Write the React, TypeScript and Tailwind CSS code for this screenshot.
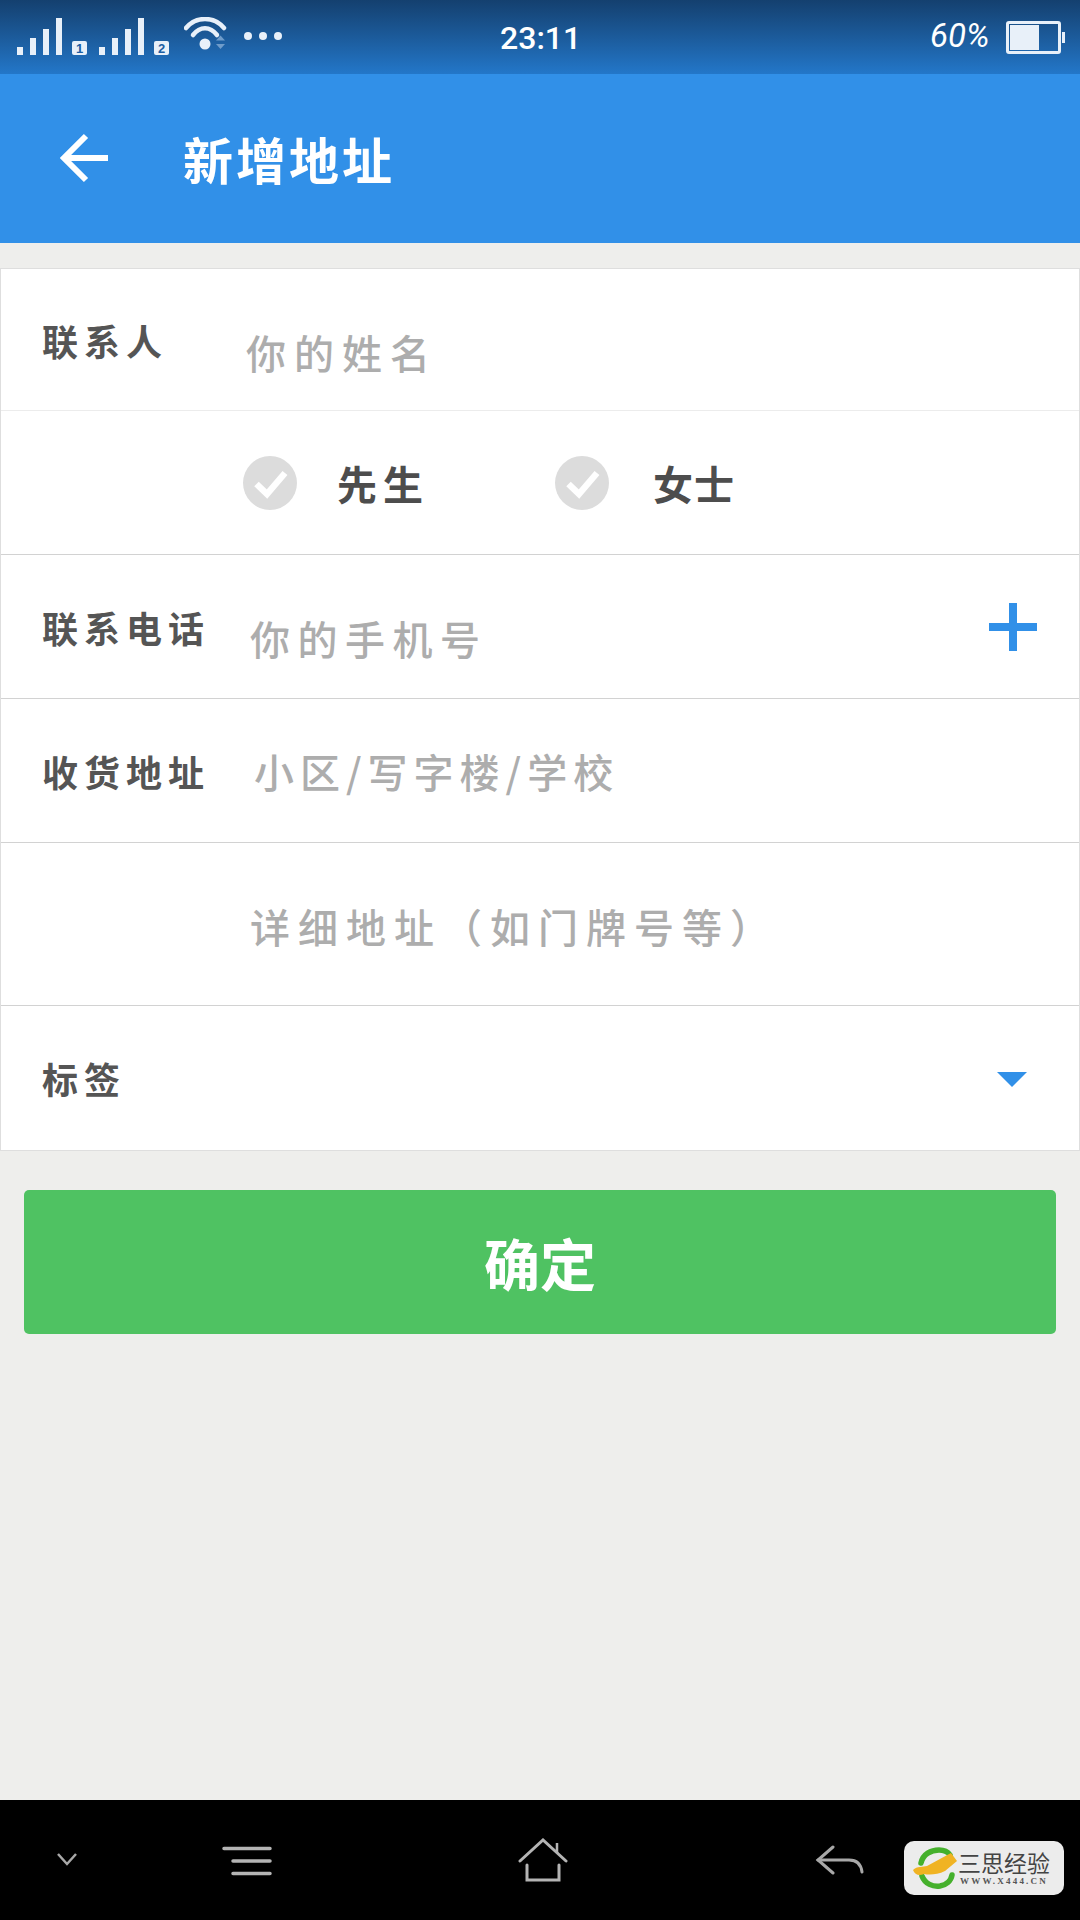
const cjk = "font-['Noto_Sans_CJK_SC','Noto_Sans',sans-serif]";

function SignalBars({ slot }: { slot: string }) {
  return (
    <div className="flex items-end">
      <div className="flex h-[37px] items-end gap-[7px]">
        <span className="h-[8px] w-[6px] bg-[#e8f0f9]" />
        <span className="h-[17px] w-[6px] bg-[#e8f0f9]" />
        <span className="h-[26px] w-[6px] bg-[#e8f0f9]" />
        <span className="h-[37px] w-[6px] bg-[#e8f0f9]" />
      </div>
      <span className="ml-[10px] flex h-[14px] w-[15px] items-center justify-center rounded-[2px] bg-[#e8f0f9] font-['Liberation_Sans',sans-serif] text-[13px] leading-none font-bold text-[#1c5ea3]">
        {slot}
      </span>
    </div>
  );
}

function WifiIcon() {
  return (
    <svg width="44" height="36" viewBox="0 0 44 36" fill="none">
      <path d="M2 11C12 -1 30 -1 40 11" stroke="#e8f0f9" strokeWidth="4.5" strokeLinecap="round" />
      <path d="M9 18C16 9 26 9 33 18" stroke="#e8f0f9" strokeWidth="4.5" strokeLinecap="round" />
      <circle cx="21" cy="27" r="5.5" fill="#e8f0f9" />
      <path d="M32 23.5L36.5 18.5L41 23.5Z" fill="#6f9cca" />
      <path d="M32 27L41 27L36.5 32Z" fill="#6f9cca" />
    </svg>
  );
}

function StatusBar() {
  return (
    <div className="relative flex h-[74px] shrink-0 items-start bg-gradient-to-b from-[#14406f] to-[#2377c9] pl-[17px] text-white">
      <div className="flex pt-[18px]">
        <SignalBars slot="1" />
        <div className="ml-[12px]">
          <SignalBars slot="2" />
        </div>
        <div className="ml-[15px] -mt-[1px]">
          <WifiIcon />
        </div>
        <div className="ml-[16px] flex h-[37px] items-center gap-[7px] pb-[1px]">
          <span className="size-[8px] rounded-full bg-[#e8f0f9]" />
          <span className="size-[8px] rounded-full bg-[#e8f0f9]" />
          <span className="size-[8px] rounded-full bg-[#e8f0f9]" />
        </div>
      </div>
      <span className="absolute left-[500px] top-[18px] font-['Roboto',sans-serif] text-[32px] leading-[40px] font-medium">
        23:11
      </span>
      <span className="absolute left-[930px] top-[16px] font-['Roboto',sans-serif] text-[33px] leading-[40px] font-normal italic">
        60%
      </span>
      <div className="absolute left-[1006px] top-[21px] flex items-center">
        <div className="h-[33px] w-[55px] rounded-[3px] border-[3px] border-[#e8f0f9] p-[1px]">
          <div className="h-full w-[29px] bg-[#e8f0f9]" />
        </div>
        <span className="ml-[1px] h-[11px] w-[3px] bg-[#e8f0f9]" />
      </div>
    </div>
  );
}

function Header() {
  return (
    <header className="flex h-[169px] shrink-0 items-center bg-[#3190e8] pl-[60px] pb-[2px] text-white">
      <svg width="50" height="50" viewBox="0 0 50 50" fill="none">
        <path d="M48 25H5M26 3L4 25L26 47" stroke="#fff" strokeWidth="6" />
      </svg>
      <h1 className={`${cjk} ml-[73px] text-[50px] leading-none font-bold tracking-[3px]`}>新增地址</h1>
    </header>
  );
}

function Label({ children }: { children: string }) {
  return (
    <span className={`${cjk} w-[204px] shrink-0 text-[36px] leading-none font-bold tracking-[6px] text-[#555]`}>
      {children}
    </span>
  );
}

function Hint({ children, className }: { children: string; className: string }) {
  return <span className={`${cjk} text-[40px] leading-none font-medium text-[#adadad] ${className}`}>{children}</span>;
}

function GenderOption({ text, className }: { text: string; className: string }) {
  return (
    <div className={`flex items-center ${className}`}>
      <svg width="54" height="54" viewBox="0 0 54 54" className="shrink-0">
        <circle cx="27" cy="27" r="27" fill="#dcdcdc" />
        <path d="M13.5 28L24 38L42 17" fill="none" stroke="#fff" strokeWidth="6.5" />
      </svg>
      <span className={`${cjk} text-[40px] leading-none font-bold text-[#4d4d4d]`}>{text}</span>
    </div>
  );
}

function Form() {
  return (
    <section className="mt-[25px] border border-[#dedede] bg-white">
      <div className="flex h-[142px] items-center border-b border-[#ececec] pl-[41px]">
        <Label>联系人</Label>
        <Hint className="pt-[25px] tracking-[8px]">你的姓名</Hint>
      </div>
      <div className="flex h-[144px] items-center border-b border-[#d2d2d2] pl-[242px]">
        <GenderOption text="先生" className="w-[312px] gap-[40px] [&>span]:tracking-[6px]" />
        <GenderOption text="女士" className="gap-[44px] [&>span]:tracking-[1px]" />
      </div>
      <div className="flex h-[144px] items-center border-b border-[#d2d2d2] pl-[41px]">
        <Label>联系电话</Label>
        <Hint className="ml-[4px] pt-[22px] tracking-[7.5px]">你的手机号</Hint>
        <svg width="48" height="48" viewBox="0 0 48 48" className="ml-auto mr-[42px]">
          <path d="M20 0H28V20H48V28H28V48H20V28H0V20H20Z" fill="#3190e8" />
        </svg>
      </div>
      <div className="flex h-[144px] items-center border-b border-[#d2d2d2] pl-[41px]">
        <Label>收货地址</Label>
        <Hint className="ml-[8px] tracking-[6px]">小区/写字楼/学校</Hint>
      </div>
      <div className="flex h-[163px] items-center border-b border-[#d2d2d2] pl-[249px]">
        <Hint className="pt-[4px] tracking-[8px]">详细地址（如门牌号等）</Hint>
      </div>
      <div className="flex h-[144px] items-center pl-[41px]">
        <Label>标签</Label>
        <svg width="30" height="15" viewBox="0 0 30 15" className="ml-auto mr-[52px] mt-[2px]">
          <path d="M0 0H30L15 15Z" fill="#3190e8" />
        </svg>
      </div>
    </section>
  );
}

function NavBar() {
  return (
    <nav className="relative flex h-[120px] shrink-0 items-start bg-black">
      <svg width="22" height="14" viewBox="0 0 22 14" fill="none" className="ml-[56px] mt-[52px]">
        <path d="M2 2L11 12L20 2" stroke="#a8a8a8" strokeWidth="2.5" />
      </svg>
      <svg width="50" height="30" viewBox="0 0 50 30" className="ml-[144px] mt-[46px]">
        <path d="M2 2.5H48M11 15H48M11 27.5H48" stroke="#b4b4b4" strokeWidth="3.5" strokeLinecap="round" />
      </svg>
      <svg width="52" height="44" viewBox="0 0 52 44" fill="none" className="ml-[246px] mt-[38px]">
        <path d="M2 23L25 2L48 23" stroke="#b4b4b4" strokeWidth="3" strokeLinecap="round" />
        <path d="M39 5V15" stroke="#b4b4b4" strokeWidth="2.5" />
        <path d="M9 27V42H41V27" stroke="#b4b4b4" strokeWidth="3" strokeLinecap="round" />
      </svg>
      <svg width="50" height="30" viewBox="0 0 50 30" fill="none" className="ml-[245px] mt-[45px]">
        <path d="M18 2L3 15L18 28" stroke="#a8a8a8" strokeWidth="3" strokeLinecap="round" />
        <path d="M3 15H34C41 15 46 19 47 27" stroke="#a8a8a8" strokeWidth="3" strokeLinecap="round" />
      </svg>
      {/* Site badge laid over the navigation bar */}
      <div className="absolute left-[904px] top-[41px] flex h-[54px] w-[160px] items-center rounded-[10px] bg-[#ececec] pl-[7px]">
        <svg width="46" height="46" viewBox="0 0 46 46" fill="none" className="shrink-0">
          <path d="M10 18C12 9 20 5 28 5C33 5 37 7 39 10" stroke="#45b02c" strokeWidth="5.5" strokeLinecap="round" />
          <path d="M11 31C14 39 22 42 29 41C35 40 40 36 41 30" stroke="#45b02c" strokeWidth="5.5" strokeLinecap="round" />
          <path d="M2 25C6 21 12 22 16 21L40 8L46 16L34 26C26 30 18 30 13 29C8 31 4 30 2 25Z" fill="#f0b323" />
        </svg>
        <div className="ml-[1px] flex flex-col items-center">
          <span className={`${cjk} text-[23px] leading-[26px] font-normal text-[#444]`}>三思经验</span>
          <span className="font-['Liberation_Serif',serif] text-[9px] leading-[12px] font-bold tracking-[2.2px] text-[#555]">
            WWW.X444.CN
          </span>
        </div>
      </div>
    </nav>
  );
}

export default function App() {
  return (
    <div className="flex h-[1920px] w-[1080px] flex-col overflow-hidden bg-[#eeeeec]">
      <StatusBar />
      <Header />
      <main className="flex-1">
        <Form />
        <div className="px-[24px] pt-[39px]">
          <button className={`${cjk} flex h-[144px] w-full items-center justify-center rounded-[5px] bg-[#4fc262] text-[56px] leading-none font-bold text-white`}>
            确定
          </button>
        </div>
      </main>
      <NavBar />
    </div>
  );
}
